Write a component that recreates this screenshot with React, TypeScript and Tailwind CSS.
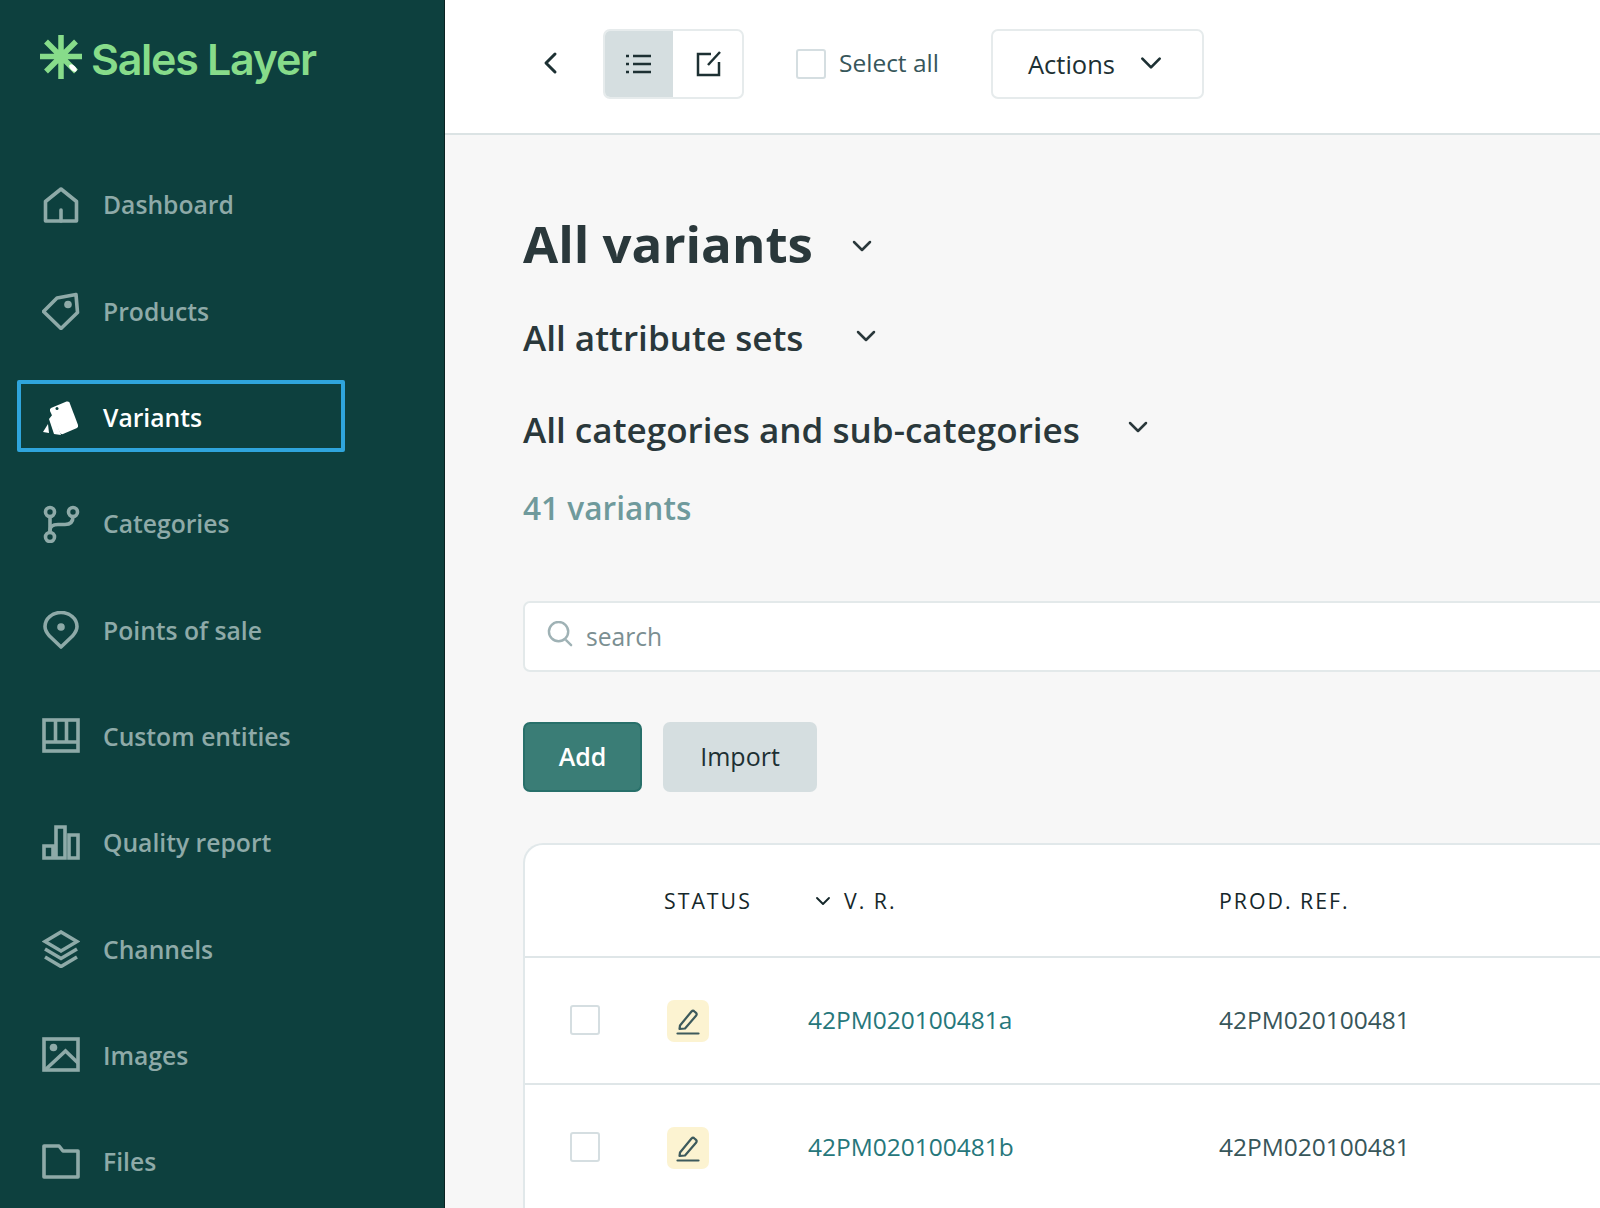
import React from "react";

const s = { fill: "none", stroke: "currentColor", strokeWidth: 3.6, strokeLinejoin: "round" as const, strokeLinecap: "round" as const };

const icons: Record<string, React.ReactNode> = {
  Dashboard: (<svg width="38" height="38" viewBox="0 0 38 38" {...s}><path d="M3.500 35V15.500L19 3l15.500 12.500V35Z" /><path d="M19 24v11" /></svg>),
  Products: (<svg width="38" height="38" viewBox="0 0 38 38" {...s}><path d="M1.500 19.500 15 6l19-3.500 1.500 18L19 36.500Z" /><circle cx="26" cy="12.500" r="3.800" fill="currentColor" stroke="none" /></svg>),
  Variants: (<svg width="38" height="38" viewBox="0 0 38 38"><path d="M7 20l4-5 8 21-7-1zM1 33l5-8 1 9z" fill="#fff" /><path d="M9 9 24.500 2.500q2-.5 3 1L36 26q.5 2-1 3l-14 6q-2 .5-3-1L8 12q-.5-2 1-3Z" fill="#fff" /><circle cx="15" cy="9.500" r="1.500" fill="#0d403e" /></svg>),
  Categories: (<svg width="38" height="38" viewBox="0 0 38 38" {...s}><circle cx="8" cy="7" r="4.500" /><circle cx="8" cy="32" r="4.500" /><circle cx="31" cy="7" r="4.500" /><path d="M8 11.500V27.500" /><path d="M31 11.500c0 6-3 8-8 8H16c-4 0-8 1.500-8 6" /></svg>),
  "Points of sale": (<svg width="38" height="38" viewBox="0 0 38 38" {...s}><path d="M19 36 7.500 25C3 20 3 17 3 15.500a16 14 0 0 1 32 0C35 18 34 21 30.500 25Z" /><circle cx="19" cy="16" r="3.800" fill="currentColor" stroke="none" /></svg>),
  "Custom entities": (<svg width="38" height="38" viewBox="0 0 38 38" {...s} strokeLinecap="butt" strokeLinejoin="miter" strokeWidth={3.6}><rect x="2" y="3" width="34" height="31" /><path d="M2 25h34M13.500 3v22M24.500 3v22" /></svg>),
  "Quality report": (<svg width="38" height="38" viewBox="0 0 38 38" {...s} strokeLinecap="butt" strokeLinejoin="miter" strokeWidth={3.6}><path d="M2 34V22h9v12ZM14 34V3h9v31ZM27 34V11h9v23Z" /></svg>),
  Channels: (<svg width="38" height="38" viewBox="0 0 38 38" {...s} strokeLinecap="butt" strokeLinejoin="miter"><path d="M19 2 35 11.500 19 21 3 11.500Z" /><path d="M3 19l16 9.500L35 19M3 27l16 9.500L35 27" /></svg>),
  Images: (<svg width="38" height="38" viewBox="0 0 38 38" {...s} strokeLinecap="butt" strokeLinejoin="miter" strokeWidth={3.6}><rect x="2" y="3" width="34" height="31" /><path d="M3 34 23.500 15 36 27" /><circle cx="11.500" cy="11.500" r="3.800" fill="currentColor" stroke="none" /></svg>),
  Files: (<svg width="38" height="38" viewBox="0 0 38 38" {...s} strokeWidth={3.6}><path d="M2 3h15l4 5h15v26H2Z" /></svg>),
};

const nav = ["Dashboard", "Products", "Variants", "Categories", "Points of sale", "Custom entities", "Quality report", "Channels", "Images", "Files"];

function Chevron({ className = "", size = 24 }: { className?: string; size?: number }) {
  return (
    <svg className={className} width={size} height={size} viewBox="0 0 24 24" fill="none" stroke="currentColor" strokeWidth="2.500" strokeLinecap="round" strokeLinejoin="round">
      <path d="M4 8l8 8 8-8" />
    </svg>
  );
}

function Pencil() {
  return (
    <svg width="26" height="28" viewBox="0 0 26 28" fill="none" stroke="#3d5a5c" strokeWidth="2.200">
      <path d="M5 18.500 16.500 4.500q1.500-1.500 3 0l1.500 1.300q1.300 1.300 0 3L10 21.500l-5.500.5Z" strokeLinejoin="round" />
      <path d="M2.500 26.500h21" strokeLinecap="round" />
    </svg>
  );
}

function Row({ vr, pr }: { vr: string; pr: string }) {
  return (
    <div className="flex items-center h-[127px] border-b-2 border-[#dfe6e8] text-[24.500px]">
      <span className="ml-[45px] w-[30px] h-[30px] rounded-[3px] border-2 border-[#d5dee1] bg-white shrink-0 mt-[-2px]" />
      <span className="ml-[67px] w-[42px] h-[42px] rounded-[7px] bg-[#fcf3d1] flex items-center justify-center shrink-0"><Pencil /></span>
      <span className="ml-[99px] w-[411px] text-[#26777b] shrink-0">{vr}</span>
      <span className="text-[#37565a]">{pr}</span>
    </div>
  );
}

export default function App() {
  return (
    <div className="flex w-[1600px] h-[1208px] overflow-hidden bg-[#f7f7f7]" style={{ fontFamily: '"Open Sans", sans-serif' }}>
      <aside className="w-[445px] shrink-0 h-full bg-[#0d403e] border-r border-[#0a2322] overflow-hidden">
        <div className="h-[169px] pl-[39px] pt-[33px] flex items-start">
          <svg width="44" height="46" viewBox="0 0 44 46" className="shrink-0 mt-[1px]" fill="none" stroke="#87dc8a" strokeWidth="5.500">
            <path d="M22 1v44M1 22.500h42M7 7.500l30 30M37 7.500l-30 30" />
            <ellipse cx="34" cy="34" rx="4.500" ry="2.500" transform="rotate(45 34 34)" fill="#fff" stroke="none" />
          </svg>
          <span className="ml-[8px] text-[43px] font-semibold leading-[52px] tracking-[-1.300px] text-[#87dc8a]" style={{ fontFamily: 'Inter, sans-serif' }}>Sales Layer</span>
        </div>
        <nav className="flex flex-col gap-[34.300px] pl-[17px]">
          {nav.map((n) => {
            const active = n === "Variants";
            return (
              <div key={n} className={`flex items-center h-[72px] w-[328px] text-[24.700px] font-semibold ${active ? "border-[4px] border-[#2fa5dc] rounded-[2px] text-white pl-[21px] mt-[-2px] mb-[2px] pt-[4px]" : "pl-[25px] text-[#8eaaa8]"}`}>
                {icons[n]}
                <span className="ml-[23px]">{n}</span>
              </div>
            );
          })}
        </nav>
      </aside>
      <main className="flex-1 min-w-0 flex flex-col">
        <header className="h-[135px] shrink-0 bg-white border-b-2 border-[#dbe3e4] flex items-start pt-[29px] text-[#1d3033]">
          <svg width="24" height="28" viewBox="0 0 24 28" className="ml-[94px] mt-[20px] shrink-0" fill="none" stroke="currentColor" strokeWidth="3" strokeLinecap="round" strokeLinejoin="round"><path d="M16 5l-9 9 9 9" /></svg>
          <div className="ml-[40px] flex w-[141px] h-[70px] rounded-[7px] border-2 border-[#e6ebec] overflow-hidden shrink-0">
            <span className="w-[70px] -m-[2px] mr-0 bg-[#d5dee0] flex items-center justify-center">
              <svg width="26" height="24" viewBox="0 0 26 24" fill="none" stroke="currentColor" strokeWidth="2.500"><path d="M8 4h18M8 12h18M8 20h18" /><path d="M1 4h3M1 12h3M1 20h3" /></svg>
            </span>
            <span className="flex-1 flex items-center justify-center pl-[2px] pb-[3px]">
              <svg width="26" height="28" viewBox="0 0 26 28" fill="none" stroke="currentColor" strokeWidth="2.500"><path d="M15 5H2v21h21V13" /><path d="M12 16 24 3" /></svg>
            </span>
          </div>
          <span className="ml-[52px] mt-[20px] w-[30px] h-[30px] rounded-[3px] border-2 border-[#d5dee1] shrink-0" />
          <span className="ml-[13px] mt-[17px] text-[24.500px] leading-[34px] text-[#37565a] shrink-0">Select all</span>
          <div className="ml-[52px] w-[213px] h-[70px] rounded-[7px] border-2 border-[#e6ebec] flex items-center pl-[35px] text-[25.500px] shrink-0">
            Actions
            <Chevron className="ml-[23px] -mt-[3px]" size={26} />
          </div>
        </header>
        <div className="flex-1 pl-[78px] overflow-hidden">
          <div className="mt-[73px] flex items-center h-[70px] text-[#2a383b]">
            <h1 className="text-[51px] font-bold leading-[70px] w-[300px]">All variants</h1>
            <Chevron className="ml-[27px] mt-[6px]" size={24} />
          </div>
          <div className="mt-[34px] flex items-center h-[50px] text-[#2a383b]">
            <span className="text-[35.100px] font-semibold">All attribute sets</span>
            <Chevron className="ml-[51px] -mt-[2px]" size={24} />
          </div>
          <div className="mt-[42px] flex items-center h-[50px] text-[#2a383b]">
            <span className="text-[35.100px] font-semibold">All categories and sub-categories</span>
            <Chevron className="ml-[46px] -mt-[4px]" size={24} />
          </div>
          <div className="mt-[32px] text-[31.600px] font-semibold leading-[44px] text-[#6f9a9c]">41 variants</div>
          <div className="mt-[71px] h-[71px] w-[1100px] bg-white border-2 border-[#e3e9ea] rounded-l-[7px] flex items-center pl-[22px]">
            <svg width="27" height="27" viewBox="0 0 28 28" fill="none" stroke="#9fb2b5" strokeWidth="2.500" strokeLinecap="round" className="-mt-[4px]"><circle cx="12" cy="11" r="10" /><path d="M20 20l5 5" /></svg>
            <span className="ml-[12px] text-[24.600px] text-[#7b8f92] mt-[2px]">search</span>
          </div>
          <div className="mt-[50px] flex gap-[21px]">
            <button className="w-[119px] h-[70px] rounded-[7px] bg-[#3a7d76] border-2 border-[#28706a] text-white font-semibold text-[25px]">Add</button>
            <button className="w-[154px] h-[70px] rounded-[7px] bg-[#d5dee0] text-[#1d3033] text-[25px] font-medium">Import</button>
          </div>
          <div className="mt-[51px] w-[1100px] bg-white border-t-2 border-l-2 border-[#e1e8ea] rounded-tl-[20px]">
            <div className="flex items-center h-[113px] border-b-2 border-[#dfe6e8] text-[21.300px] tracking-[2px] text-[#15272a] font-medium">
              <span className="ml-[139px] w-[150px] shrink-0">STATUS</span>
              <Chevron size={18} className="shrink-0" />
              <span className="ml-[12px] w-[375px] shrink-0">V. R.</span>
              <span>PROD. REF.</span>
            </div>
            <Row vr="42PM020100481a" pr="42PM020100481" />
            <Row vr="42PM020100481b" pr="42PM020100481" />
          </div>
        </div>
      </main>
    </div>
  );
}
